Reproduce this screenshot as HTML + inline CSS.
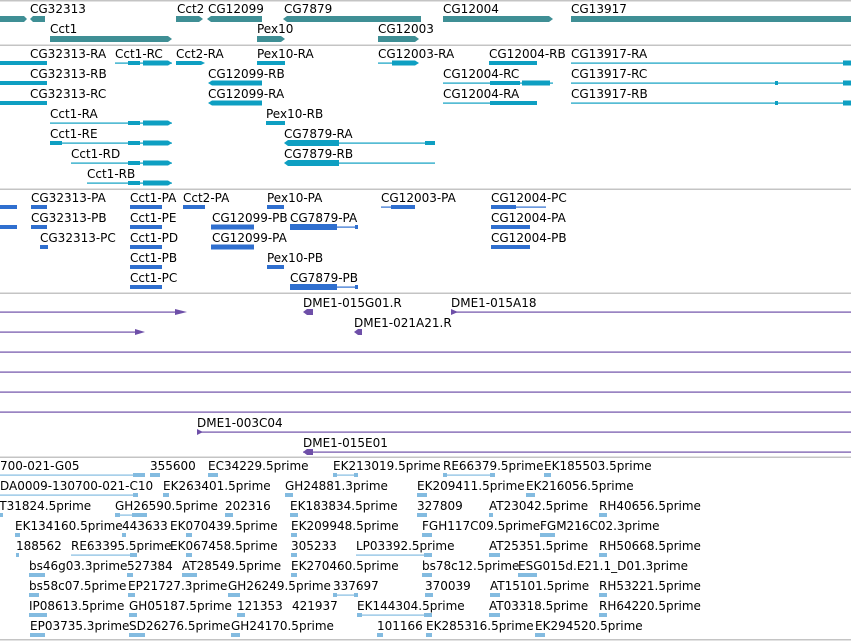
<!DOCTYPE html>
<html><head><meta charset="utf-8"><style>
html,body{margin:0;padding:0;background:#fff;width:851px;height:641px;overflow:hidden}
svg{display:block}
text{font-family:"DejaVu Sans","Liberation Sans",sans-serif;font-size:12px;fill:#000}
.g{fill:#3f8f95}.t{fill:#0e9fc2}.p{fill:#2f6fcf}.u{fill:#6e4fa8}.b{fill:#83bbe0}
</style></head><body>
<svg width="851" height="641" viewBox="0 0 851 641">
<g fill="#c4c4c4">
<rect x="0" y="0" width="851" height="1.5"/><rect x="0" y="44.5" width="851" height="1.5"/>
<rect x="0" y="188.5" width="851" height="1.5"/><rect x="0" y="292.5" width="851" height="1.5"/>
<rect x="0" y="456.5" width="851" height="1.5"/><rect x="0" y="639" width="851" height="1.5"/>
</g>
<g class="g">
<polygon points="0,16 24,16 27,19 24,22 0,22"/><polygon points="30,19 33,16 45,16 45,22 33,22"/>
<polygon points="176,16 199,16 203,19 199,22 176,22"/>
<polygon points="207,19 211,16 262,16 262,22 211,22"/>
<polygon points="283,19 287,16 421,16 421,22 287,22"/>
<polygon points="443,16 549,16 553,19 549,22 443,22"/>
<rect x="571" y="16" width="280" height="6"/>
<polygon points="50,36 168,36 172,39 168,42 50,42"/>
<polygon points="257,36 281,36 285,39 281,42 257,42"/>
<polygon points="378,36 415,36 419,39 415,42 378,42"/>
</g>
<g>
<text x="30" y="13">CG32313</text><text x="177" y="13">Cct2</text><text x="208" y="13">CG12099</text>
<text x="284" y="13">CG7879</text><text x="443" y="13">CG12004</text><text x="571" y="13">CG13917</text>
<text x="50" y="33">Cct1</text><text x="257" y="33">Pex10</text><text x="378" y="33">CG12003</text>
</g>
<g class="t">
<rect x="0" y="61" width="47" height="4"/><rect x="0" y="81" width="47" height="4"/><rect x="0" y="101" width="47" height="4"/>
<rect x="115" y="62.5" width="57" height="1.2"/><rect x="128" y="61" width="12" height="4"/><polygon points="143,60.5 168,60.5 172,63 168,65.5 143,65.5"/>
<polygon points="176,61 201,61 205,63 201,65 176,65"/>
<rect x="257" y="61" width="28" height="4"/>
<rect x="378" y="62.5" width="14" height="1.2"/><polygon points="392,60.5 415,60.5 419,63 415,65.5 392,65.5"/>
<rect x="489" y="61" width="48" height="4"/>
<rect x="571" y="62.5" width="280" height="1.2"/><rect x="843" y="60.5" width="8" height="5"/>
<polygon points="208,83 212,80.5 262,80.5 262,85.5 212,85.5"/>
<rect x="443" y="82.5" width="110" height="1.2"/><rect x="490" y="81" width="30" height="4"/><rect x="522" y="80.5" width="28" height="5"/>
<rect x="571" y="82.5" width="280" height="1.2"/><rect x="843" y="80.5" width="8" height="5"/><rect x="775" y="81" width="3" height="4"/>
<polygon points="208,103 212,100.5 262,100.5 262,105.5 212,105.5"/>
<rect x="443" y="102.5" width="94" height="1.2"/><rect x="490" y="101" width="47" height="4"/>
<rect x="571" y="102.5" width="280" height="1.2"/><rect x="843" y="100.5" width="8" height="5"/><rect x="775" y="101" width="3" height="4"/>
<rect x="50" y="122.5" width="122" height="1.2"/><rect x="128" y="121" width="12" height="4"/><polygon points="143,120.5 168,120.5 172,123 168,125.5 143,125.5"/>
<rect x="266" y="121" width="19" height="4"/>
<rect x="50" y="142.5" width="122" height="1.2"/><rect x="50" y="141" width="12" height="4"/><rect x="128" y="141" width="12" height="4"/><polygon points="143,140.5 168,140.5 172,143 168,145.5 143,145.5"/>
<polygon points="284,143 288,140 339,140 339,146 288,146"/><rect x="339" y="142.5" width="96" height="1.2"/><rect x="425" y="141" width="10" height="4"/>
<rect x="71" y="162.5" width="101" height="1.2"/><rect x="128" y="161" width="12" height="4"/><polygon points="143,160.5 168,160.5 172,163 168,165.5 143,165.5"/>
<polygon points="284,163 288,160 339,160 339,166 288,166"/><rect x="339" y="162.5" width="96" height="1.2"/>
<rect x="87" y="182.5" width="85" height="1.2"/><rect x="128" y="181" width="12" height="4"/><polygon points="143,180.5 168,180.5 172,183 168,185.5 143,185.5"/>
</g>
<g>
<text x="30" y="58">CG32313-RA</text><text x="115" y="58">Cct1-RC</text><text x="176" y="58">Cct2-RA</text><text x="257" y="58">Pex10-RA</text>
<text x="378" y="58">CG12003-RA</text><text x="489" y="58">CG12004-RB</text><text x="571" y="58">CG13917-RA</text>
<text x="30" y="78">CG32313-RB</text><text x="208" y="78">CG12099-RB</text><text x="443" y="78">CG12004-RC</text><text x="571" y="78">CG13917-RC</text>
<text x="30" y="98">CG32313-RC</text><text x="208" y="98">CG12099-RA</text><text x="443" y="98">CG12004-RA</text><text x="571" y="98">CG13917-RB</text>
<text x="50" y="118">Cct1-RA</text><text x="266" y="118">Pex10-RB</text>
<text x="50" y="138">Cct1-RE</text><text x="284" y="138">CG7879-RA</text>
<text x="71" y="158">Cct1-RD</text><text x="284" y="158">CG7879-RB</text>
<text x="87" y="178">Cct1-RB</text>
</g>
<g class="p">
<rect x="0" y="205" width="17" height="4"/><rect x="31" y="205" width="16" height="4"/><rect x="130" y="205" width="32" height="4"/><rect x="183" y="205" width="22" height="4"/>
<rect x="267" y="205" width="17" height="4"/><rect x="381" y="206.5" width="10" height="1.2"/><rect x="391" y="205" width="24" height="4"/>
<rect x="491" y="206.5" width="55" height="1.2"/><rect x="491" y="205" width="25" height="4"/>
<rect x="0" y="225" width="17" height="4"/><rect x="31" y="225" width="16" height="4"/><rect x="130" y="225" width="32" height="4"/><rect x="211" y="224.5" width="43" height="5"/>
<rect x="290" y="224" width="47" height="6"/><rect x="337" y="226.5" width="21" height="1.2"/><rect x="355" y="225" width="3" height="4"/>
<rect x="491" y="225" width="39" height="4"/>
<rect x="40" y="245" width="8" height="4"/><rect x="130" y="245" width="32" height="4"/><rect x="211" y="244.5" width="43" height="5"/><rect x="491" y="245" width="39" height="4"/>
<rect x="130" y="265" width="32" height="4"/><rect x="267" y="265" width="17" height="4"/>
<rect x="130" y="285" width="32" height="4"/><rect x="290" y="284" width="47" height="6"/><rect x="337" y="286.5" width="21" height="1.2"/><rect x="355" y="285" width="3" height="4"/>
</g>
<g>
<text x="31" y="202">CG32313-PA</text><text x="130" y="202">Cct1-PA</text><text x="183" y="202">Cct2-PA</text><text x="267" y="202">Pex10-PA</text>
<text x="381" y="202">CG12003-PA</text><text x="491" y="202">CG12004-PC</text>
<text x="31" y="222">CG32313-PB</text><text x="130" y="222">Cct1-PE</text><text x="212" y="222">CG12099-PB</text><text x="290" y="222">CG7879-PA</text><text x="491" y="222">CG12004-PA</text>
<text x="40" y="242">CG32313-PC</text><text x="130" y="242">Cct1-PD</text><text x="212" y="242">CG12099-PA</text><text x="491" y="242">CG12004-PB</text>
<text x="130" y="262">Cct1-PB</text><text x="267" y="262">Pex10-PB</text>
<text x="130" y="282">Cct1-PC</text><text x="290" y="282">CG7879-PB</text>
</g>
<g class="u">
<rect x="0" y="311.5" width="180" height="1.2"/><polygon points="175,309 187,312 175,315"/>
<polygon points="303,312 307,309 313,309 313,315 307,315"/>
<rect x="451" y="311.5" width="400" height="1.2"/><polygon points="451,309 458,312 451,315"/>
<rect x="0" y="331.5" width="140" height="1.2"/><polygon points="135,329 145,332 135,335"/>
<polygon points="354,332 358,329 362,329 362,335 358,335"/>
<rect x="0" y="351.5" width="851" height="1.2"/><rect x="0" y="371.5" width="851" height="1.2"/>
<rect x="0" y="391.5" width="851" height="1.2"/><rect x="0" y="411.5" width="851" height="1.2"/>
<rect x="197" y="431.5" width="654" height="1.2"/><polygon points="197,429 203,432 197,435"/>
<rect x="303" y="451.5" width="548" height="1.2"/><polygon points="303,452 307,449 313,449 313,455 307,455"/>
</g>
<g>
<text x="303" y="307">DME1-015G01.R</text><text x="451" y="307">DME1-015A18</text>
<text x="354" y="327">DME1-021A21.R</text>
<text x="197" y="427">DME1-003C04</text><text x="303" y="447">DME1-015E01</text>
</g>
<g class="b">
<rect x="0" y="474.5" width="140" height="1.2"/><rect x="133" y="473" width="12" height="4"/><rect x="150" y="473" width="10" height="4"/><rect x="208" y="473" width="10" height="4"/>
<rect x="333" y="474.5" width="25" height="1.2"/><rect x="333" y="473" width="4" height="4"/><rect x="354" y="473" width="4" height="4"/>
<rect x="443" y="474.5" width="52" height="1.2"/><rect x="443" y="473" width="4" height="4"/><rect x="490" y="473" width="5" height="4"/><rect x="544" y="473" width="7" height="4"/>
<rect x="0" y="494.5" width="138" height="1.2"/><rect x="133" y="493" width="5" height="4"/><rect x="163" y="493" width="6" height="4"/><rect x="285" y="493" width="8" height="4"/><rect x="417" y="493" width="10" height="4"/><rect x="526" y="493" width="9" height="4"/>
<rect x="0" y="513" width="3" height="4"/><rect x="115" y="514.5" width="32" height="1.2"/><rect x="115" y="513" width="5" height="4"/><rect x="132" y="513" width="15" height="4"/><rect x="225" y="513" width="8" height="4"/><rect x="290" y="513" width="8" height="4"/><rect x="417" y="513" width="10" height="4"/><rect x="489" y="513" width="4" height="4"/><rect x="599" y="513" width="8" height="4"/>
<rect x="15" y="533" width="5" height="4"/><rect x="122" y="533" width="4" height="4"/><rect x="186" y="533" width="6" height="4"/><rect x="291" y="533" width="6" height="4"/><rect x="422" y="533" width="10" height="4"/><rect x="540" y="533" width="15" height="4"/>
<rect x="16" y="553" width="3" height="4"/><rect x="71" y="554.5" width="66" height="1.2"/><rect x="130" y="553" width="7" height="4"/><rect x="186" y="553" width="6" height="4"/><rect x="291" y="553" width="6" height="4"/>
<rect x="356" y="554.5" width="76" height="1.2"/><rect x="424" y="553" width="8" height="4"/><rect x="489" y="553" width="11" height="4"/><rect x="599" y="553" width="8" height="4"/>
<rect x="29" y="573" width="16" height="4"/><rect x="127" y="573" width="6" height="4"/><rect x="182" y="573" width="15" height="4"/><rect x="291" y="573" width="6" height="4"/><rect x="422" y="573" width="10" height="4"/><rect x="518" y="573" width="19" height="4"/>
<rect x="29" y="593" width="10" height="4"/><rect x="128" y="593" width="7" height="4"/><rect x="228" y="593" width="12" height="4"/><rect x="333" y="594.5" width="25" height="1.2"/><rect x="333" y="593" width="4" height="4"/><rect x="354" y="593" width="4" height="4"/><rect x="425" y="593" width="8" height="4"/><rect x="490" y="593" width="10" height="4"/><rect x="599" y="593" width="8" height="4"/>
<rect x="29" y="613" width="18" height="4"/><rect x="129" y="613" width="8" height="4"/><rect x="237" y="613" width="8" height="4"/><rect x="357" y="614.5" width="75" height="1.2"/><rect x="357" y="613" width="5" height="4"/><rect x="424" y="613" width="8" height="4"/><rect x="489" y="613" width="11" height="4"/><rect x="599" y="613" width="8" height="4"/>
<rect x="30" y="633" width="15" height="4"/><rect x="129" y="633" width="16" height="4"/><rect x="231" y="633" width="9" height="4"/><rect x="377" y="633" width="6" height="4"/><rect x="426" y="633" width="6" height="4"/><rect x="535" y="633" width="10" height="4"/>
</g>
<g>
<text x="0" y="470">700-021-G05</text><text x="150" y="470">355600</text><text x="208" y="470">EC34229.5prime</text><text x="333" y="470">EK213019.5prime</text><text x="443" y="470">RE66379.5prime</text><text x="544" y="470">EK185503.5prime</text>
<text x="0" y="490">DA0009-130700-021-C10</text><text x="163" y="490">EK263401.5prime</text><text x="285" y="490">GH24881.3prime</text><text x="417" y="490">EK209411.5prime</text><text x="526" y="490">EK216056.5prime</text>
<text x="-8" y="510">AT31824.5prime</text><text x="115" y="510">GH26590.5prime</text><text x="225" y="510">202316</text><text x="290" y="510">EK183834.5prime</text><text x="417" y="510">327809</text><text x="489" y="510">AT23042.5prime</text><text x="599" y="510">RH40656.5prime</text>
<text x="15" y="530">EK134160.5prime</text><text x="122" y="530">443633</text><text x="170" y="530">EK070439.5prime</text><text x="291" y="530">EK209948.5prime</text><text x="422" y="530">FGH117C09.5prime</text><text x="540" y="530">FGM216C02.3prime</text>
<text x="16" y="550">188562</text><text x="71" y="550">RE63395.5prime</text><text x="170" y="550">EK067458.5prime</text><text x="291" y="550">305233</text><text x="356" y="550">LP03392.5prime</text><text x="489" y="550">AT25351.5prime</text><text x="599" y="550">RH50668.5prime</text>
<text x="29" y="570">bs46g03.3prime</text><text x="127" y="570">527384</text><text x="182" y="570">AT28549.5prime</text><text x="291" y="570">EK270460.5prime</text><text x="422" y="570">bs78c12.5prime</text><text x="518" y="570">ESG015d.E21.1_D01.3prime</text>
<text x="29" y="590">bs58c07.5prime</text><text x="128" y="590">EP21727.3prime</text><text x="228" y="590">GH26249.5prime</text><text x="333" y="590">337697</text><text x="425" y="590">370039</text><text x="490" y="590">AT15101.5prime</text><text x="599" y="590">RH53221.5prime</text>
<text x="29" y="610">IP08613.5prime</text><text x="129" y="610">GH05187.5prime</text><text x="237" y="610">121353</text><text x="292" y="610">421937</text><text x="357" y="610">EK144304.5prime</text><text x="489" y="610">AT03318.5prime</text><text x="599" y="610">RH64220.5prime</text>
<text x="30" y="630">EP03735.3prime</text><text x="129" y="630">SD26276.5prime</text><text x="231" y="630">GH24170.5prime</text><text x="377" y="630">101166</text><text x="426" y="630">EK285316.5prime</text><text x="535" y="630">EK294520.5prime</text>
</g>
</svg>
</body></html>
